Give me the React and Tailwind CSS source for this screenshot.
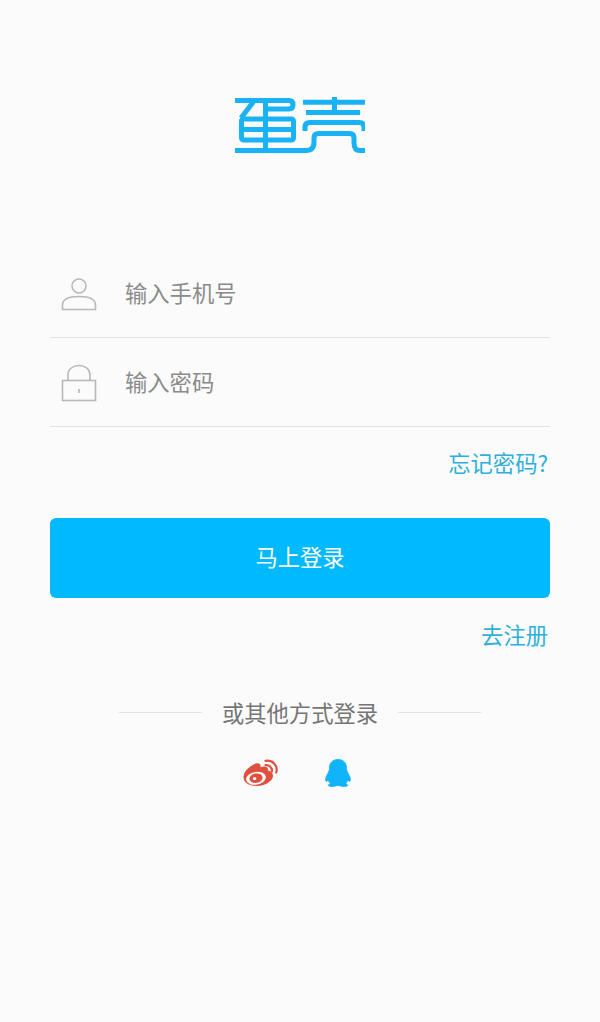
import React from "react";

const Logo = () => (
  <svg width="130" height="58" viewBox="235 96 130 58" fill="none" stroke="#18b2f5" strokeWidth="5">
    {/* left part of the logo */}
    <path d="M235 100.5H289Q293 100.5 293 104.6Q293 109 289 109H266" />
    <path d="M254 101L241 118" />
    <rect x="241.5" y="119" width="52" height="21" rx="2" />
    <path d="M240 129.5H293" />
    <path d="M265.5 100V150" />
    {/* bottom stroke runs through both parts */}
    <path d="M235 150.5H306Q314 150.5 314 142V138Q314 133.5 318.5 133.5H349.5Q354 133.5 354 138V143Q354 150.5 360 150.5H365" />
    {/* right part of the logo */}
    <path d="M303 102.3H365" />
    <path d="M334.5 97V113" />
    <path d="M306 112.5H360" />
    <path d="M305 131V127Q305 122.5 310 122.5H359Q364 122.5 364 127V131" />
  </svg>
);

const UserIcon = () => (
  <svg width="36" height="34" viewBox="0 0 36 34" fill="none" stroke="#b8b8b8" strokeWidth="1.6">
    <circle cx="18" cy="9" r="7" />
    <path d="M1.5 32.5V28C1.5 22 9 19.5 18 19.5C27 19.5 34.5 22 34.5 28V32.5Z" />
  </svg>
);

const LockIcon = () => (
  <svg width="36" height="38" viewBox="0 0 36 38" fill="none" stroke="#b8b8b8" strokeWidth="1.6">
    <path d="M7 17V11C7 5 12 1.5 18 1.5C24 1.5 29 5 29 11V17" />
    <rect x="1.5" y="16.5" width="33" height="20" />
    <path d="M18 25V29" />
  </svg>
);

const WeiboIcon = () => (
  <svg width="35" height="28" viewBox="243 759 35 28">
    <path
      fill="#e0503f"
      d="M243.5 777C243.5 771.5 250 765.5 256 763.5C259 762.5 261.2 764 260.5 767.2C264.5 766 268.5 766.2 268 770.5C271.5 771.2 273 773.5 273 776C273 781 265 786 256.5 786C249 786 243.5 782.5 243.5 777Z"
    />
    <ellipse cx="256" cy="778.2" rx="10" ry="6.4" fill="#fbfbfb" transform="rotate(-10 256 778.2)" />
    <ellipse cx="256" cy="778.2" rx="6.6" ry="4.7" fill="#e0503f" transform="rotate(-10 256 778.2)" />
    <circle cx="254.6" cy="778.6" r="1.7" fill="#fbfbfb" />
    <path d="M265.5 765.2C269.5 764.8 272.5 767.5 271.8 771.5" fill="none" stroke="#e0503f" strokeWidth="2.2" strokeLinecap="round" />
    <path d="M265.5 760.8C272.5 759.8 278.5 765.5 276.2 772.5" fill="none" stroke="#e0503f" strokeWidth="2.2" strokeLinecap="round" />
  </svg>
);

const QQIcon = () => (
  <svg width="26" height="28" viewBox="0 0 26 28" fill="#0fb4fa" stroke="#0fb4fa" strokeWidth="0.8">
    <path d="M13 0.5C7.5 0.5 4.5 4 4.5 9C4.5 11 3.8 12.5 2.8 14.5C1.2 17.2 0.4 19.5 0.7 21.5C1 23 2 22.5 3.2 21C3.8 22.8 4.6 24 5.5 24.8C3.8 25.4 3 26 3.4 26.6C4 27.6 8 27.8 10.5 27C11.5 26.7 12.2 26.5 13 26.5C13.8 26.5 14.5 26.7 15.5 27C18 27.8 22 27.6 22.6 26.6C23 26 22.2 25.4 20.5 24.8C21.4 24 22.2 22.8 22.8 21C24 22.5 25 23 25.3 21.5C25.6 19.5 24.8 17.2 23.2 14.5C22.2 12.5 21.5 11 21.5 9C21.5 4 18.5 0.5 13 0.5Z" />
  </svg>
);

const App = () => {
  return (
    <div
      className="w-[600px] h-[1022px] bg-[#fbfbfb] flex flex-col px-[50px] pt-[96px] overflow-hidden"
      style={{ fontFamily: '"Noto Sans CJK SC", "Noto Sans", sans-serif' }}
    >
      <div className="flex justify-center h-[58px]">
        <Logo />
      </div>

      <div className="mt-[95px] h-[89px] border-b border-b-[#e3e3e3] flex items-center pl-[11px] pt-[1px]">
        <div className="w-[64px] flex">
          <UserIcon />
        </div>
        <span className="mb-[4px] text-[22.3px] leading-[30px] text-[#8a8a8a]">输入手机号</span>
      </div>

      <div className="h-[89px] border-b border-b-[#e3e3e3] flex items-center pl-[11px] pt-[1px]">
        <div className="w-[64px] flex">
          <LockIcon />
        </div>
        <span className="mb-[4px] text-[22.3px] leading-[30px] text-[#8a8a8a]">输入密码</span>
      </div>

      <div className="mt-[20px] flex justify-end pr-[2px]">
        <span className="text-[22.3px] leading-[30px] text-[#2fb0dc]">忘记密码?</span>
      </div>

      <button className="mt-[41px] h-[80px] pb-[2px] bg-[#00b9ff] rounded-[6px] text-white text-[22.3px]">
        马上登录
      </button>

      <div className="mt-[21px] flex justify-end pr-[2px]">
        <span className="text-[22.3px] leading-[30px] text-[#2fb0dc]">去注册</span>
      </div>

      <div className="mt-[48px] flex items-center justify-center">
        <div className="w-[83px] h-px bg-[#e3e3e3]" />
        <span className="mx-[20px] text-[22.3px] leading-[30px] text-[#757575]">或其他方式登录</span>
        <div className="w-[83px] h-px bg-[#e3e3e3]" />
      </div>

      <div className="mt-[32px] flex justify-center items-start gap-[47px] pr-[6px]">
        <WeiboIcon />
        <QQIcon />
      </div>
    </div>
  );
};

export default App;
